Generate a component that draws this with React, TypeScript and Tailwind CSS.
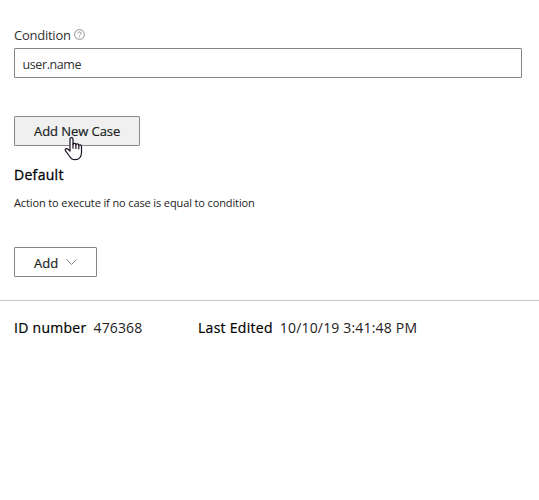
import React from "react";

function HelpIcon() {
  return (
    <svg className="ml-[3px] mt-[-2px] h-[11px] w-[11px]" viewBox="0 0 11 11" fill="none" stroke="#858585">
      <circle cx="5.5" cy="5.5" r="4.9" strokeWidth="0.9" />
      <path d="M3.9 4.4c0-2 3.2-2 3.2 0 0 1.1-1.6 1.1-1.6 2.2M5.5 7.6v1" strokeWidth="0.9" />
    </svg>
  );
}

function HandCursor() {
  return (
    <svg
      className="absolute left-[49px] top-[19px] h-[25px] w-[19px]"
      viewBox="0 0 19 25"
      fill="#fff"
      stroke="#1a1020"
      strokeWidth="1.2"
      strokeLinejoin="round"
      strokeLinecap="round"
    >
      <path d="M6 15V3.4C6 .9 9 .9 9 3.4v4.9c.3-1.4 2.9-1.3 2.9.4.4-1.2 2.9-1 2.9.7.5-1.1 2.7-.7 2.7 1v5.8c0 4.6-2.4 7.5-6.3 7.5-3.2 0-4.8-1.6-6.2-4.2l-3.6-4.8c-.8-1.7 1.2-2.7 2.6-1.5z" />
      <path d="M9 8v4.2M11.9 8.8v3.7M14.8 9.6v3.2" fill="none" />
    </svg>
  );
}

export default function App() {
  return (
    <main className="h-[500px] w-full overflow-hidden bg-white pt-[25px] font-['Open_Sans','Noto_Sans',sans-serif] text-black">
      <section className="flex flex-col items-start px-[14px]">
        <div className="flex h-[20px] items-center">
          <label className="text-[13px] leading-[20px] tracking-[-0.25px] text-[#323130]">Condition</label>
          <HelpIcon />
        </div>
        <div className="mt-[3px] flex h-[30px] w-[508px] items-center rounded-[1px] border border-[#858585] px-[7.5px]">
          <span className="pt-[3px] text-[12.5px] leading-[20px] tracking-[-0.4px] text-[#323130]">user.name</span>
        </div>
        <button className="relative mt-[38px] flex h-[30px] w-[126px] items-center rounded-[1px] border border-[#8a8886] bg-[#f0f0f0] pl-[19px] text-[#201f1e]">
          <span className="whitespace-nowrap text-[13px] leading-[20px] tracking-[-0.06px] [-webkit-text-stroke:0.2px]">Add New Case</span>
          <HandCursor />
        </button>
        <h2 className="mt-[19px] text-[14px] leading-[20px] tracking-[0.3px] [-webkit-text-stroke:0.3px]">Default</h2>
        <p className="mt-[10px] whitespace-nowrap text-[11px] leading-[16px] tracking-[-0.12px] text-[#1c1c1c]">Action to execute if no case is equal to condition</p>
        <button className="mt-[36px] flex h-[30px] w-[83px] items-center rounded-[1px] border border-[#858585] pl-[19px] text-[#201f1e]">
          <span className="pt-[2px] text-[13px] leading-[20px] [-webkit-text-stroke:0.2px]">Add</span>
          <svg className="ml-[8px] h-[6px] w-[11px]" viewBox="0 0 11 6" fill="none" stroke="#858580">
            <path d="m.5.5 5 5 5-5" />
          </svg>
        </button>
      </section>
      <footer className="mt-[23px] flex h-[55px] whitespace-nowrap border-t border-[#c8c8c8] pl-[14px] pt-[17px] text-[14px] leading-[20px]">
        <div className="flex w-[184px] gap-[7px]">
          <span className="tracking-[0.28px] [-webkit-text-stroke:0.2px]">ID number</span>
          <span className="tracking-[0.12px] text-[#222]">476368</span>
        </div>
        <div className="flex gap-[7px]">
          <span className="tracking-[0.28px] [-webkit-text-stroke:0.2px]">Last Edited</span>
          <span className="tracking-[0.18px] text-[#222]">10/10/19 3:41:48 PM</span>
        </div>
      </footer>
    </main>
  );
}
